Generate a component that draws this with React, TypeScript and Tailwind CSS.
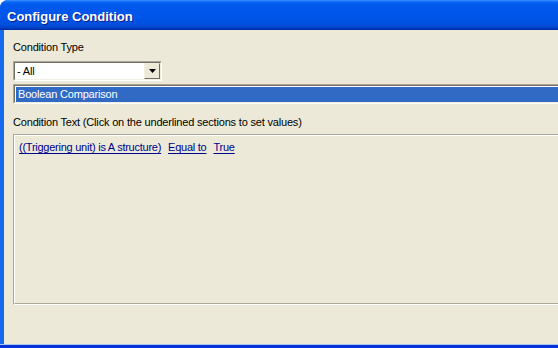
export default function App() {
  return (
    <div className="w-[558px] h-[348px] overflow-hidden bg-white">
      <div className="w-[580px] h-[348px] flex flex-col rounded-t-[8px] overflow-hidden bg-[linear-gradient(90deg,#0831d9_0px,#166aee_1px,#166aee_3px)]">
        {/* Title bar */}
        <div className="h-[30px] shrink-0 flex items-center pl-[7px] pt-[3px] bg-[linear-gradient(180deg,#3d95ff_0px,#0a66f5_2px,#0058ee_5px,#0055e8_18px,#0050df_24px,#0048d0_27px,#0028a0_30px)]">
          <span className="text-white font-bold text-[13px] font-['Liberation_Sans',Arial,sans-serif] [text-shadow:1px_1px_0_#0a1e8c]">
            Configure Condition
          </span>
        </div>

        {/* Body */}
        <div className="flex-1 flex flex-col bg-[#166aee]">
          <div className="flex-1 ml-[4px] bg-[#ece9d8] flex flex-col pl-[9px] pt-[10px] font-['Liberation_Sans',Arial,sans-serif] text-[11px] tracking-[-0.18px] text-black">
            <div className="h-[14px] leading-[14px]">Condition Type</div>

            {/* Combo box */}
            <div className="mt-[7px] w-[149px] h-[20px] border border-t-[#aca899] border-l-[#aca899] border-b-white border-r-white">
              <div className="h-full border border-t-[#716f64] border-l-[#716f64] border-b-[#f1efe2] border-r-[#f1efe2] bg-white flex items-center">
                <span className="flex-1 pl-[2px] leading-[14px]">- All</span>
                <div className="w-[16px] h-[16px] bg-[#ece9d8] border border-t-[#f1efe2] border-l-[#f1efe2] border-b-[#716f64] border-r-[#716f64] flex items-center justify-center">
                  <svg width="7" height="4" viewBox="0 0 7 4">
                    <path d="M0 0h7L3.5 4z" fill="#000" />
                  </svg>
                </div>
              </div>
            </div>

            {/* List box */}
            <div className="mt-[3px] h-[20px] border border-t-[#aca899] border-l-[#aca899] border-b-white border-r-white">
              <div className="h-full border border-t-[#716f64] border-l-[#716f64] border-b-[#f1efe2] border-r-[#f1efe2] bg-white p-[1px]">
                <div className="h-[15px] bg-[#316ac5] text-white pl-[2px] leading-[15px]">
                  Boolean Comparison
                </div>
              </div>
            </div>

            <div className="mt-[11px] h-[14px] leading-[14px]">
              Condition Text (Click on the underlined sections to set values)
            </div>

            {/* Condition text area */}
            <div className="mt-[5px] h-[171px] border border-t-[#aca899] border-l-[#aca899] border-b-white border-r-white">
              <div className="h-full border border-t-white border-l-white border-b-[#aca899] border-r-[#aca899] pl-[4px] pt-[4px]">
                <div className="flex gap-[7px] text-[#000090] leading-[14px] tracking-[-0.25px]">
                  <span className="underline underline-offset-[2px]">((Triggering unit) is A structure)</span>
                  <span className="underline underline-offset-[2px]">Equal to</span>
                  <span className="underline underline-offset-[2px]">True</span>
                </div>
              </div>
            </div>
          </div>
          <div className="h-[1px] bg-[#a6caf0] shrink-0" />
          <div className="h-[3px] bg-[#0831d9] shrink-0" />
        </div>
      </div>
    </div>
  );
}
